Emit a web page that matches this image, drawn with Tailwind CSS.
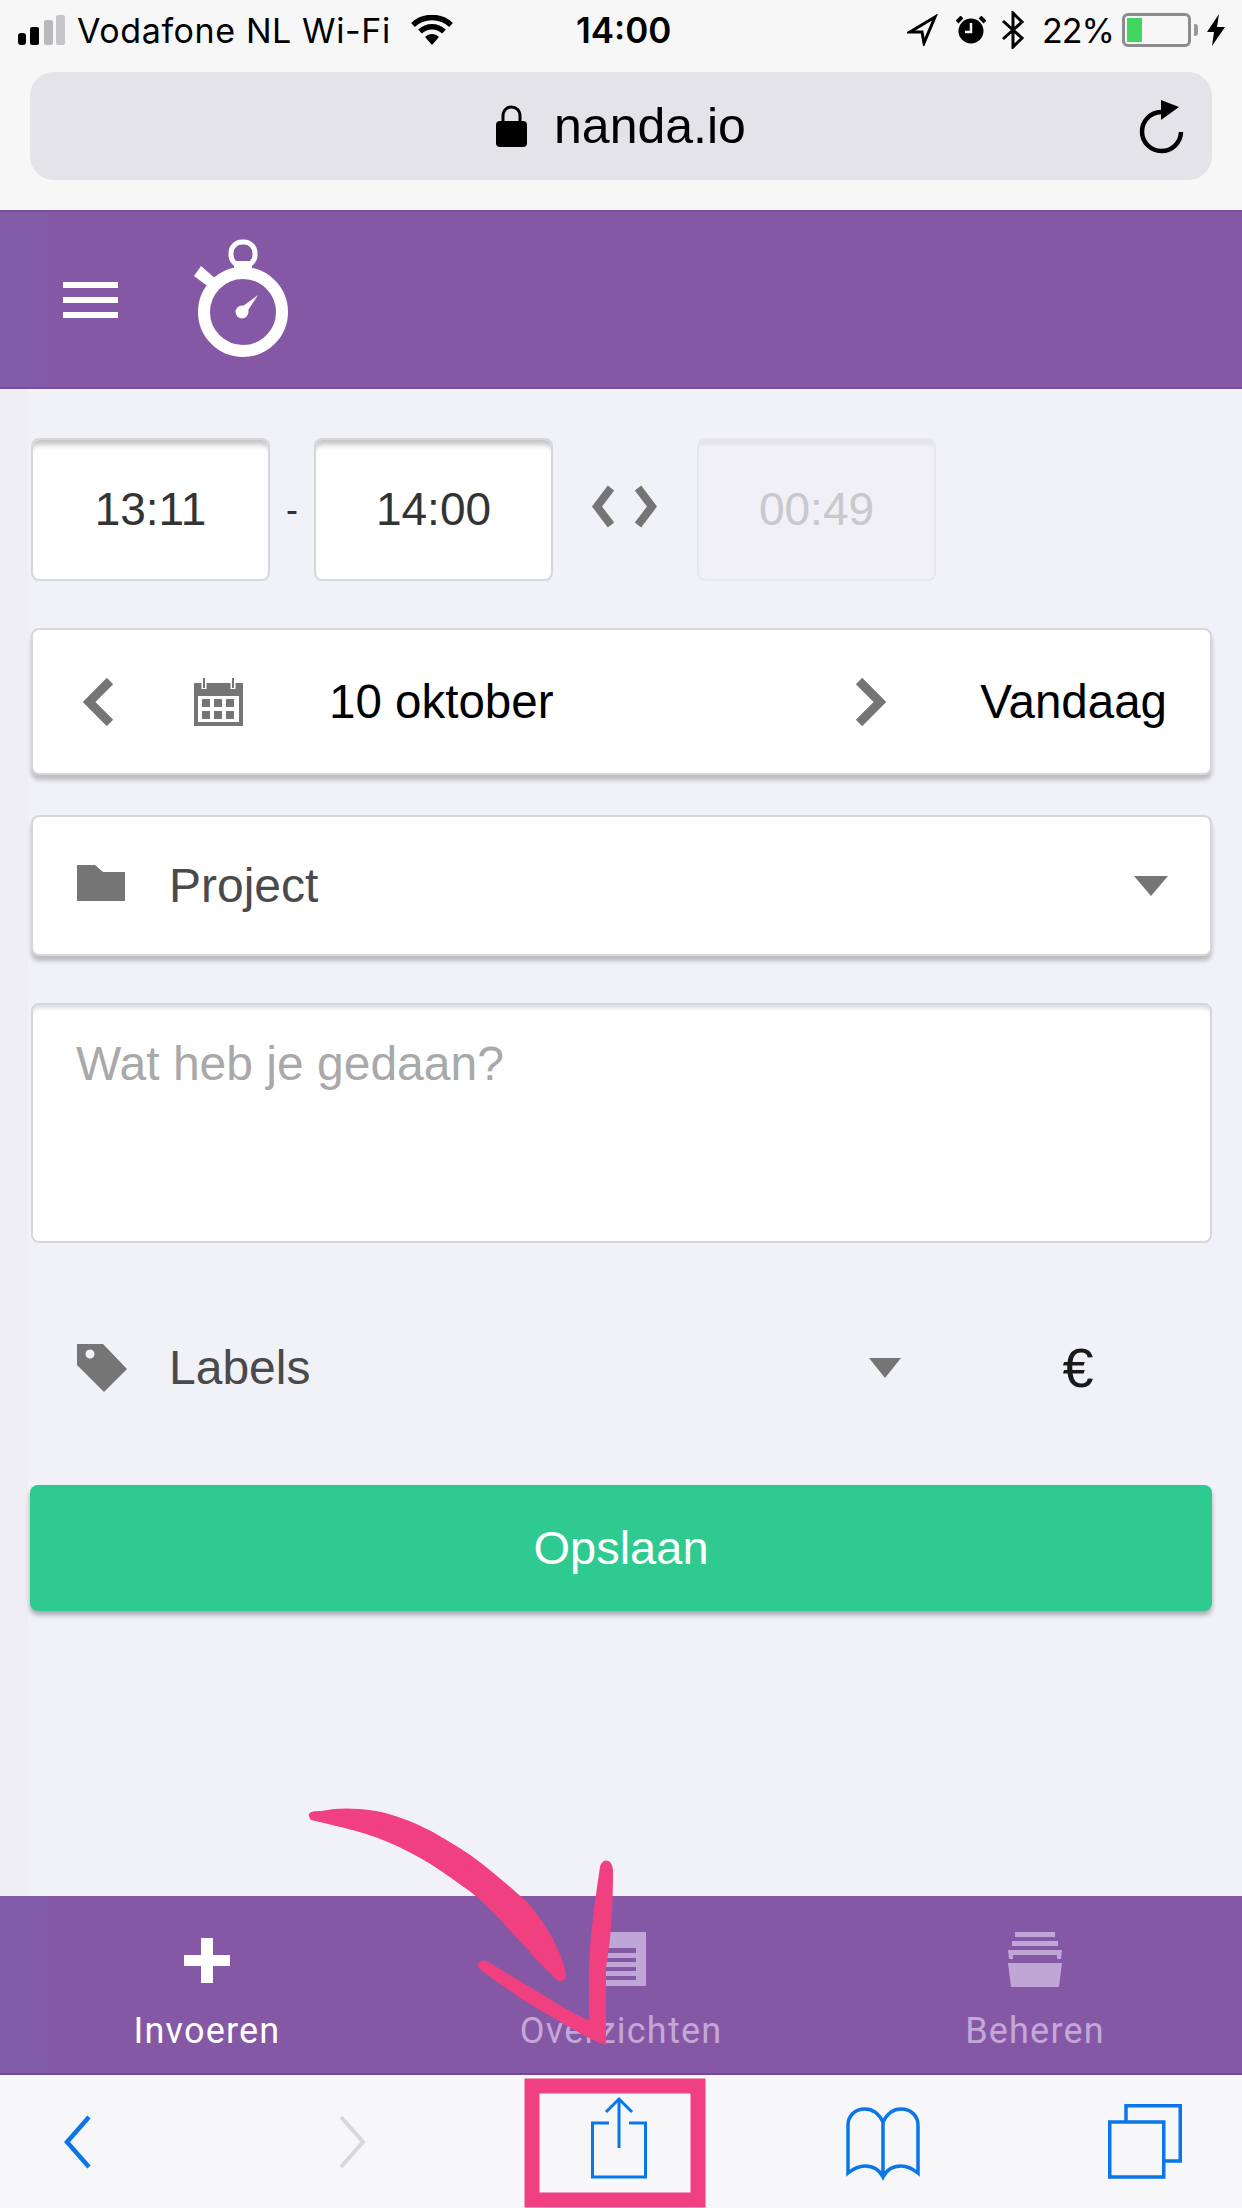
<!DOCTYPE html>
<html lang="nl">
<head>
    <meta charset="UTF-8">
    <meta name="viewport" content="width=device-width, initial-scale=1.0">
    <title>nanda.io</title>
    <script src="https://cdn.jsdelivr.net/npm/@tailwindcss/browser@4"></script>
</head>
<body class="bg-[#f1f1f8]">
<div class="relative w-[1242px] h-[2208px] overflow-hidden flex flex-col font-['Liberation_Sans',sans-serif]">

    <!-- Browser chrome -->
    <div class="h-[210px] shrink-0 bg-[#f7f7f8]">
        <!-- Status bar -->
        <div class="h-[60px] flex items-center text-black text-[34px] font-['Inter',sans-serif] font-normal">
            <svg class="ml-[18px] w-[48px] h-[32px] shrink-0" viewBox="0 0 48 32">
                <rect x="0" y="19" width="8" height="12" rx="3" fill="#000"/>
                <rect x="12" y="13" width="9" height="18" rx="2" fill="#000"/>
                <rect x="26" y="6" width="9" height="25" rx="2" fill="#b9b9bb"/>
                <rect x="38" y="1" width="9" height="30" rx="2" fill="#c6c6c8"/>
            </svg>
            <span class="ml-[11px] w-[315px] whitespace-nowrap tracking-[0.6px]">Vodafone NL Wi-Fi</span>
            <svg class="ml-[19px] w-[42px] h-[30px] shrink-0" viewBox="0 0 42 30">
                <path d="M2 10 C12 0 30 0 40 10" fill="none" stroke="#000" stroke-width="5.500"/>
                <path d="M9 16.500 C16 10 26 10 33 16.500" fill="none" stroke="#000" stroke-width="5.500"/>
                <path d="M14 22 L21 30 L28 22 C24 18 18 18 14 22Z" fill="#000"/>
            </svg>
            <span class="ml-[123px] w-[100px] text-[35px] font-semibold whitespace-nowrap">14:00</span>
            <svg class="ml-[231px] w-[31px] h-[32px] shrink-0" viewBox="0 0 31 32">
                <path d="M28 3 L3 18 L15 18 L17 29Z" fill="none" stroke="#000" stroke-width="3" stroke-linejoin="miter"/>
            </svg>
            <svg class="ml-[18px] w-[30px] h-[28px] shrink-0" viewBox="0 0 30 28">
                <circle cx="15" cy="15" r="12.500" fill="#000"/>
                <path d="M1 6 L6 1 M29 6 L24 1" stroke="#000" stroke-width="4"/>
                <path d="M15 7 V16 H9" fill="none" stroke="#f7f7f8" stroke-width="2.500"/>
            </svg>
            <svg class="ml-[15px] w-[24px] h-[38px] shrink-0" viewBox="0 0 24 38">
                <path d="M2 10 L21 27 L12 36 V2 L21 11 L2 28" fill="none" stroke="#000" stroke-width="3"/>
            </svg>
            <span class="ml-[17px] w-[70px] whitespace-nowrap tracking-[-1px]">22%</span>
            <div class="ml-[10px] w-[69px] h-[34px] shrink-0 rounded-[6px] border-[3px] border-[#8c8c8c] p-[2px]">
                <div class="w-[15px] h-full bg-[#3fd75f]"></div>
            </div>
            <div class="ml-[3px] w-[4px] h-[12px] shrink-0 bg-[#9a9a9a] rounded-r-[3px]"></div>
            <svg class="ml-[9px] w-[18px] h-[32px] shrink-0" viewBox="0 0 18 32">
                <path d="M12 0 L0 18 H7 L5 32 L18 13 H10Z" fill="#000"/>
            </svg>
        </div>
        <!-- URL bar -->
        <div class="mt-[12px] mx-[30px] h-[108px] rounded-[24px] bg-[#e3e3e8] grid grid-cols-[1fr_auto_1fr] items-center">
            <span></span>
            <div class="flex items-center">
                <svg class="w-[31px] h-[42px]" viewBox="0 0 31 42">
                    <path d="M7 18 V11 C7 -1 24 -1 24 11 V18" fill="none" stroke="#000" stroke-width="3"/>
                    <rect x="0" y="16" width="31" height="26" rx="4" fill="#000"/>
                </svg>
                <span class="ml-[27px] text-[50px] leading-none text-black">nanda.io</span>
            </div>
            <svg class="justify-self-end mr-[26px] w-[48px] h-[56px]" viewBox="0 0 48 56">
                <path d="M23 14 A19.500 19.500 0 1 0 43 34" fill="none" stroke="#000" stroke-width="4.500"/>
                <path d="M23 2 L41 9 L23 22Z" fill="#000"/>
            </svg>
        </div>
    </div>

    <!-- App header -->
    <header class="h-[179px] shrink-0 flex items-center border-y-2 border-[#7a4e9c] bg-[linear-gradient(90deg,#7f5ba8_47px,#8558a5_47px)]">
        <div class="ml-[63px] w-[55px] flex flex-col gap-[9px]">
            <div class="h-[6px] bg-white"></div>
            <div class="h-[6px] bg-white"></div>
            <div class="h-[6px] bg-white"></div>
        </div>
        <svg class="ml-[74px] w-[100px] h-[120px] -mt-[1px]" viewBox="0 0 100 120">
            <circle cx="51" cy="73" r="39" fill="none" stroke="#fff" stroke-width="12"/>
            <rect x="39" y="3" width="24" height="24" rx="11" fill="none" stroke="#fff" stroke-width="5"/>
            <rect x="42" y="22" width="18" height="9" fill="#fff"/>
            <path d="M2 37 L9 27 L25 41 L18 49Z" fill="#fff"/>
            <circle cx="50" cy="73" r="6.500" fill="#fff"/>
            <path d="M47 70 L66 56 L53 76Z" fill="#fff"/>
        </svg>
    </header>

    <!-- Form -->
    <main class="flex-1 pl-[31px] pr-[30px] bg-[linear-gradient(90deg,#eeeef4_28px,#f1f1f8_28px)]">
        <div class="mt-[49px] flex items-stretch h-[143px] text-[46px]">
            <div class="w-[239px] rounded-[8px] border-2 border-[#d6d6dc] bg-white shadow-[inset_0_9px_5px_-4px_rgba(0,0,0,0.22)] flex items-center justify-center text-[#333]">13:11</div>
            <div class="w-[44px] flex items-center justify-center text-[#333] text-[36px]">-</div>
            <div class="w-[239px] rounded-[8px] border-2 border-[#d6d6dc] bg-white shadow-[inset_0_9px_5px_-4px_rgba(0,0,0,0.22)] flex items-center justify-center text-[#333]">14:00</div>
            <svg class="ml-[38px] w-[67px] h-[143px]" viewBox="0 0 67 143">
                <path d="M20 50 L6 68.500 L20 87 M47 50 L61 68.500 L47 87" fill="none" stroke="#757575" stroke-width="8"/>
            </svg>
            <div class="ml-[39px] w-[239px] rounded-[8px] border-2 border-[#e6e6ec] bg-[#f0f0f6] shadow-[inset_0_9px_3px_-4px_rgba(0,0,0,0.05)] flex items-center justify-center text-[#c8c8ce]">00:49</div>
        </div>

        <div class="mt-[47px] h-[147px] rounded-[8px] border-2 border-[#d6d6dc] bg-white shadow-[0_5px_4px_rgba(0,0,0,0.22)] flex items-center">
            <svg class="ml-[50px] w-[32px] h-[48px] shrink-0" viewBox="0 0 32 48">
                <path d="M27 3 L6 24 L27 45" fill="none" stroke="#757575" stroke-width="9"/>
            </svg>
            <svg class="ml-[79px] w-[49px] h-[48px] shrink-0" viewBox="0 0 49 48">
                <path d="M0 5 H49 V48 H0Z M4 18 V44 H45 V18Z" fill="#757575" fill-rule="evenodd"/>
                <path d="M10 4 V11 M39 4 V11" stroke="#fff" stroke-width="5"/>
                <path d="M10 0 V10 M39 0 V10" stroke="#757575" stroke-width="2"/>
                <path d="M8 21 h8 v8 h-8z M20 21 h8 v8 h-8z M32 21 h8 v8 h-8z M8 33 h8 v8 h-8z M20 33 h8 v8 h-8z M32 33 h8 v8 h-8z" fill="#757575"/>
            </svg>
            <span class="ml-[86px] w-[525px] shrink-0 text-[47.500px] text-black">10 oktober</span>
            <svg class="w-[32px] h-[48px] shrink-0" viewBox="0 0 32 48">
                <path d="M5 3 L26 24 L5 45" fill="none" stroke="#757575" stroke-width="9"/>
            </svg>
            <span class="ml-auto mr-[43px] text-[47.500px] text-black">Vandaag</span>
        </div>

        <div class="mt-[40px] h-[141px] rounded-[8px] border-2 border-[#d6d6dc] bg-white shadow-[0_5px_4px_rgba(0,0,0,0.22)] flex items-center">
            <svg class="ml-[44px] w-[48px] h-[36px] shrink-0 -mt-[6px]" viewBox="0 0 48 36">
                <path d="M0 0 H18 L26 7 H48 V36 H0Z" fill="#757575"/>
            </svg>
            <span class="ml-[44px] text-[48px] text-[#4a4a4a]">Project</span>
            <svg class="ml-auto mr-[42px] w-[34px] h-[20px] shrink-0" viewBox="0 0 34 20">
                <path d="M0 0 H34 L17 20Z" fill="#757575"/>
            </svg>
        </div>

        <div class="mt-[47px] h-[240px] rounded-[8px] border-2 border-[#d6d6dc] bg-white shadow-[inset_0_6px_4px_-3px_rgba(0,0,0,0.14)] pl-[43px] pt-[31px] text-[48px] leading-[56px] text-[#a9a9a9]">Wat heb je gedaan?</div>

        <div class="mt-[89px] h-[72px] flex items-center">
            <svg class="ml-[46px] w-[50px] h-[48px] shrink-0" viewBox="0 0 50 48">
                <path d="M0 0 H26 L50 25 L27 48 L0 21Z M13 5.500 A4.500 4.500 0 1 0 13.010 5.500Z" fill="#757575" fill-rule="evenodd"/>
            </svg>
            <span class="ml-[42px] text-[48px] text-[#4a4a4a]">Labels</span>
            <svg class="ml-[559px] w-[32px] h-[20px] shrink-0" viewBox="0 0 32 20">
                <path d="M0 0 H32 L16 20Z" fill="#757575"/>
            </svg>
            <span class="ml-[161px] text-[56px] font-light text-[#1a1a1a]">€</span>
        </div>

        <div class="mt-[81px] -ml-[1px] h-[126px] rounded-[8px] bg-[#2fca8f] shadow-[0_4px_5px_rgba(0,0,0,0.3)] flex items-center justify-center text-[47px] text-white">Opslaan</div>
    </main>

    <!-- App navigation -->
    <nav class="h-[179px] shrink-0 grid grid-cols-3 border-b-2 border-[#6f4a97] bg-[linear-gradient(90deg,#7f5ba8_47px,#8558a5_47px)] text-[36px] font-['Roboto',sans-serif] tracking-[1.200px]">
        <div class="flex flex-col items-center pt-[36px] text-white">
            <svg class="w-[46px] h-[56px]" viewBox="0 0 46 56">
                <path d="M17 6 H29 V23 H46 V34 H29 V51 H17 V34 H0 V23 H17Z" fill="#fff"/>
            </svg>
            <span class="mt-[23px] leading-[40px]">Invoeren</span>
        </div>
        <div class="flex flex-col items-center pt-[36px] text-[#c3a7d6]">
            <svg class="w-[50px] h-[56px]" viewBox="0 0 50 56">
                <path d="M0 0 H50 V54 H0Z M4 16 V48 H40 V16Z" fill="#c0a6d6" fill-rule="evenodd"/>
                <path d="M8 21 H40 V26 H8Z M8 30 H40 V35 H8Z M8 39 H40 V44 H8Z" fill="#c0a6d6"/>
            </svg>
            <span class="mt-[23px] leading-[40px]">Overzichten</span>
        </div>
        <div class="flex flex-col items-center pt-[36px] text-[#c3a7d6]">
            <svg class="w-[54px] h-[56px]" viewBox="0 0 54 56">
                <path d="M7 0 H47 V5 H7Z M4 9 H50 V14 H4Z" fill="#c0a6d6"/>
                <path d="M0 18 H54 L53 27 H49 V23 H5 V27 H1Z" fill="#c0a6d6"/>
                <path d="M0 31 H54 L51 55 H3Z" fill="#c0a6d6"/>
            </svg>
            <span class="mt-[23px] leading-[40px]">Beheren</span>
        </div>
    </nav>

    <!-- Browser toolbar -->
    <div class="h-[133px] shrink-0 bg-[#f7f7fa] flex">
        <svg class="ml-[62px] w-[30px] h-[133px]" viewBox="0 0 30 133">
            <path d="M27 42 L5 67 L27 92" fill="none" stroke="#0a76e8" stroke-width="4.500"/>
        </svg>
        <svg class="ml-[246px] w-[30px] h-[133px]" viewBox="0 0 30 133">
            <path d="M3 42 L25 67 L3 92" fill="none" stroke="#d8d8dc" stroke-width="4"/>
        </svg>
        <svg class="ml-[223px] w-[56px] h-[133px]" viewBox="0 0 56 133">
            <path d="M18 48 H1.500 V102 H54.500 V48 H38" fill="none" stroke="#0a76e8" stroke-width="3"/>
            <path d="M28 73 V25 M15 37 L28 24 L41 37" fill="none" stroke="#0a76e8" stroke-width="3"/>
        </svg>
        <svg class="ml-[199px] w-[74px] h-[133px]" viewBox="0 0 74 133">
            <g transform="translate(0 32)" fill="none" stroke="#0a76e8" stroke-width="3.500">
                <path d="M37 15 C32 5 26 2 19 2 C9 2 2 9 2 18 V66 C7 62 12 59 19 59 C27 59 33 62 37 70 C41 62 47 59 55 59 C62 59 67 62 72 66 V18 C72 9 65 2 55 2 C48 2 42 5 37 15 V70"/>
            </g>
        </svg>
        <svg class="ml-[188px] w-[74px] h-[133px]" viewBox="0 0 74 133">
            <g transform="translate(0 29)" fill="none" stroke="#0a76e8" stroke-width="3.500">
                <rect x="1.750" y="18" width="54" height="55"/>
                <path d="M18 18 V1.750 H72.250 V57 H56"/>
            </g>
        </svg>
    </div>

    <!-- Annotation drawn over the screenshot -->
    <svg class="absolute inset-0 w-[1242px] h-[2208px] pointer-events-none" viewBox="0 0 1242 2208">
        <path d="M532 2086 H698 V2200 H532Z" fill="none" stroke="#f04080" stroke-width="15"/>
        <path d="M311 1820 C305 1812 312 1811 321 1811 C335 1808 348 1808 359 1809 C375 1810 388 1813 401 1818 C418 1824 434 1832 448 1841 C464 1850 478 1860 491 1871 C503 1881 514 1890 526 1901 C537 1913 547 1928 554 1941 C560 1954 565 1965 566 1975 C566 1981 559 1983 556 1979 C547 1970 538 1962 530 1952 C522 1943 514 1935 506 1926 C497 1916 487 1906 477 1897 C466 1888 455 1881 444 1873 C430 1863 414 1854 397 1846 C384 1840 371 1835 356 1831 C342 1827 327 1824 311 1820Z" fill="#f04080"/>
        <path d="M479 1963 C482 1959 487 1961 495 1966 C515 1978 530 1987 543 1995 C560 2005 575 2015 589 2020 L589 1980 C589 1950 592 1920 600 1867 C602 1858 612 1858 613 1870 C613 1900 612 1935 606 1967 L606 2045 C590 2040 578 2032 566 2025 C550 2015 535 2008 519 1997 C505 1987 490 1977 481 1970 C478 1968 477 1965 479 1963Z" fill="#f04080"/>
    </svg>
</div>
</body>
</html>
